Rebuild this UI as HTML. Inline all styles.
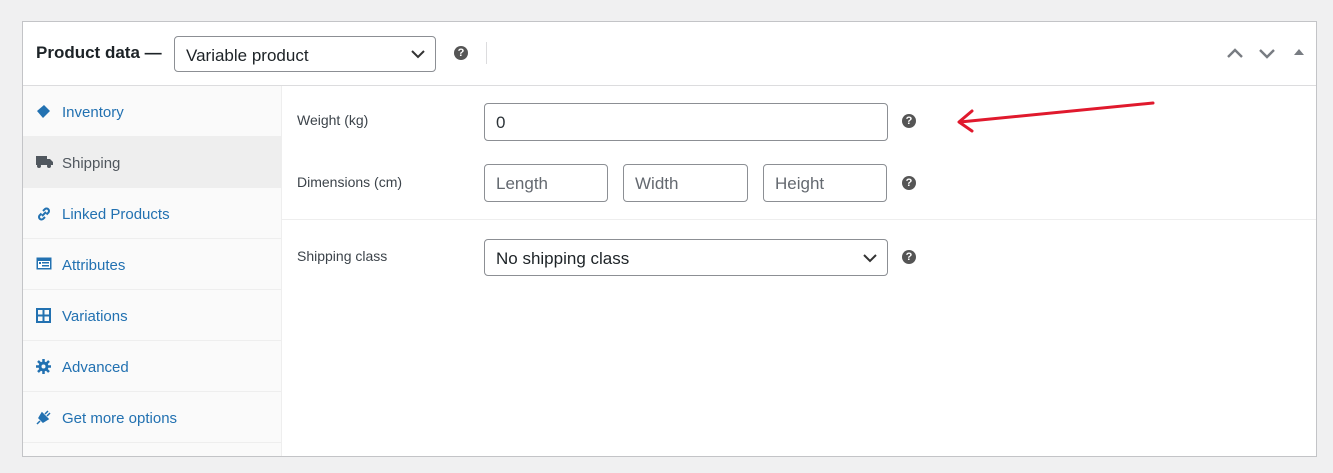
<!DOCTYPE html>
<html><head><meta charset="utf-8"><style>
*{box-sizing:border-box;margin:0;padding:0}
body{width:1333px;height:473px;background:#f0f0f1;font-family:"Liberation Sans",sans-serif;position:relative;overflow:hidden}
.abs{position:absolute}
.panel{left:22px;top:21px;width:1295px;height:436px;background:#fff;border:1px solid #c3c4c7}
.side{left:23px;top:86px;width:259px;height:370px;background:#fafafa;border-right:1px solid #eee}
.tab{position:absolute;left:0;width:258px;height:51px;border-bottom:1px solid #eee;color:#2271b1;font-size:15px;line-height:53px;padding-left:39px}
.tab svg{position:absolute;left:13px;top:18px}
.inp{position:absolute;border:1px solid #8c8f94;border-radius:4px;background:#fff;font-size:17px;color:#2c3338;padding-left:11px;line-height:38px}
.ph{color:#646970}
.lbl{position:absolute;left:297px;font-size:14px;color:#3c434a}
.help{position:absolute;width:14px;height:14px;border-radius:50%;background:#555;color:#fff;font-size:11px;font-weight:bold;text-align:center;line-height:14px}
</style></head><body>
<div class="abs panel"></div>
<div class="abs" style="left:23px;top:85px;width:1293px;height:1px;background:#dcdcde"></div>
<div class="abs" style="left:36px;top:43px;font-size:17px;font-weight:bold;color:#1d2327">Product data —</div>
<div class="inp" style="left:174px;top:36px;width:262px;height:36px;color:#1d2327;font-size:17px;line-height:37px">Variable product
<svg class="abs" style="right:10px;top:13px" width="14" height="9" viewBox="0 0 14 9"><path d="M1 1l6 6 6-6" fill="none" stroke="#333" stroke-width="2"/></svg></div>
<div class="help" style="left:454px;top:46px">?</div>
<div class="abs" style="left:486px;top:42px;width:1px;height:22px;background:#dcdcde"></div>
<svg class="abs" style="left:1226px;top:45px" width="90" height="16" viewBox="0 0 90 16"><path d="M2 12l7-7 7 7" fill="none" stroke="#787c82" stroke-width="2.4"/><path d="M34 5l7 7 7-7" fill="none" stroke="#787c82" stroke-width="2.4"/><path d="M68 10l5-6 5 6z" fill="#787c82"/></svg>
<div class="abs side"></div>
<div class="abs" style="left:23px;top:86px">
<div class="tab" style="top:0"><svg width="16" height="16" viewBox="0 0 16 16"><path d="M1 7l7-6 6 6-7 7z" fill="#2271b1"/></svg>Inventory</div>
<div class="tab" style="top:51px;background:#eee;color:#50575e"><svg width="17" height="14" viewBox="0 0 17 14"><rect x="0" y="1" width="11" height="9" fill="#50575e"/><path d="M11 4h3l3 3v3h-6z" fill="#50575e"/><circle cx="3" cy="11" r="2" fill="#50575e"/><circle cx="13" cy="11" r="2" fill="#50575e"/></svg>Shipping</div>
<div class="tab" style="top:102px"><svg width="16" height="16" viewBox="0 0 16 16"><path d="M6 10l4-4M7 5l2-2a2.5 2.5 0 013.5 3.5l-2 2M9 11l-2 2a2.5 2.5 0 01-3.5-3.5l2-2" fill="none" stroke="#2271b1" stroke-width="2"/></svg>Linked Products</div>
<div class="tab" style="top:153px"><svg width="16" height="14" viewBox="0 0 16 14"><rect x="0.5" y="0.5" width="15" height="12" fill="#2271b1"/><rect x="2" y="4" width="12" height="7" fill="#fff"/><rect x="3" y="5" width="2" height="2" fill="#2271b1"/><rect x="6" y="5" width="7" height="1.5" fill="#2271b1"/><rect x="6" y="8" width="7" height="1.5" fill="#2271b1"/></svg>Attributes</div>
<div class="tab" style="top:204px"><svg width="15" height="15" viewBox="0 0 15 15"><rect x="1" y="1" width="13" height="13" fill="none" stroke="#2271b1" stroke-width="2"/><path d="M7.5 1v13M1 7.5h13" stroke="#2271b1" stroke-width="2"/></svg>Variations</div>
<div class="tab" style="top:255px"><svg width="15" height="15" viewBox="0 0 15 15"><circle cx="7.5" cy="7.5" r="5" fill="#2271b1"/><path d="M7.5 0v15M0 7.5h15M2 2l11 11M13 2L2 13" stroke="#2271b1" stroke-width="2.5"/><circle cx="7.5" cy="7.5" r="2" fill="#fafafa"/></svg>Advanced</div>
<div class="tab" style="top:306px"><svg width="15" height="15" viewBox="0 0 15 15"><path d="M1 14l3-3M3 8l4 4 5-3-6-6z" fill="#2271b1" stroke="#2271b1" stroke-width="1.5"/><path d="M9 4l3-3M11 6l3-3" stroke="#2271b1" stroke-width="1.5"/></svg>Get more options</div>
</div>
<div class="lbl" style="top:112px">Weight (kg)</div>
<div class="inp" style="left:484px;top:103px;width:404px;height:38px">0</div>
<div class="help" style="left:902px;top:114px">?</div>
<div class="lbl" style="top:174px">Dimensions (cm)</div>
<div class="inp ph" style="left:484px;top:164px;width:124px;height:38px">Length</div>
<div class="inp ph" style="left:623px;top:164px;width:125px;height:38px">Width</div>
<div class="inp ph" style="left:763px;top:164px;width:124px;height:38px">Height</div>
<div class="help" style="left:902px;top:176px">?</div>
<div class="abs" style="left:282px;top:219px;width:1034px;height:1px;background:#eee"></div>
<div class="lbl" style="top:248px">Shipping class</div>
<div class="inp" style="left:484px;top:239px;width:404px;height:37px;color:#1d2327;line-height:38px">No shipping class
<svg class="abs" style="right:10px;top:14px" width="14" height="9" viewBox="0 0 14 9"><path d="M1 1l6 6 6-6" fill="none" stroke="#333" stroke-width="2"/></svg></div>
<div class="help" style="left:902px;top:250px">?</div>
<svg class="abs" style="left:950px;top:95px" width="210" height="40" viewBox="0 0 210 40"><path d="M203 8L10 27M22 16L9 27l13 9" fill="none" stroke="#e0192d" stroke-width="3" stroke-linecap="round" stroke-linejoin="round"/></svg>
</body></html>
